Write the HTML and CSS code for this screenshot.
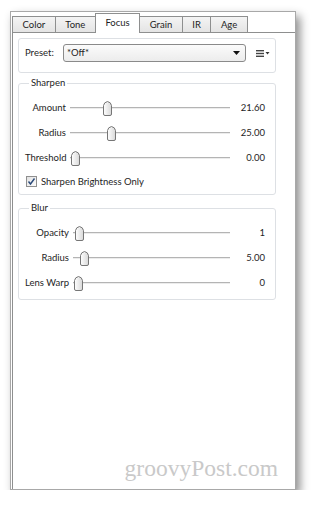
FILE: index.html
```html
<!DOCTYPE html>
<html lang="en">
<head>
  <meta charset="UTF-8" />
  <title>Focus</title>
  <link rel="stylesheet" href="styles.css">
</head>
<body>

  <div class="window">
    <div class="tabs">
      <div class="tab">Color</div>
      <div class="tab">Tone</div>
      <div class="tab active">Focus</div>
      <div class="tab">Grain</div>
      <div class="tab">IR</div>
      <div class="tab">Age</div>
    </div>

    <div class="pane">
      <div class="group preset">
        <span class="preset-label">Preset:</span>
        <div class="select">
          <span>*Off*</span>
          <svg width="7" height="4" viewBox="0 0 7 4"><path d="M0 0H7L3.5 4Z" fill="#111"/></svg>
        </div>
        <svg class="menu" width="14" height="7" viewBox="0 0 14 7">
          <rect x="0" y="0" width="8" height="1.4" fill="#444"/>
          <rect x="0" y="2.8" width="8" height="1.4" fill="#444"/>
          <rect x="0" y="5.6" width="8" height="1.4" fill="#444"/>
          <path d="M9.5 2H13.5L11.5 4.5Z" fill="#333"/>
        </svg>
      </div>

      <fieldset class="group sharpen">
        <legend>Sharpen</legend>
        <div class="row">
          <span class="label">Amount</span>
          <div class="track"><span class="thumb" style="left: 32.5px"></span></div>
          <span class="value">21.60</span>
        </div>
        <div class="row">
          <span class="label">Radius</span>
          <div class="track"><span class="thumb" style="left: 36.5px"></span></div>
          <span class="value">25.00</span>
        </div>
        <div class="row">
          <span class="label">Threshold</span>
          <div class="track"><span class="thumb" style="left: 0.5px"></span></div>
          <span class="value">0.00</span>
        </div>
        <label class="check">
          <span class="box">
            <svg width="9" height="9" viewBox="0 0 9 9"><path d="M1.5 4.5L3.5 7L7.5 1.5" fill="none" stroke="#2b4a7a" stroke-width="1.4"/></svg>
          </span>
          Sharpen Brightness Only
        </label>
      </fieldset>

      <fieldset class="group blur">
        <legend>Blur</legend>
        <div class="row">
          <span class="label">Opacity</span>
          <div class="track"><span class="thumb" style="left: 1.5px"></span></div>
          <span class="value">1</span>
        </div>
        <div class="row">
          <span class="label">Radius</span>
          <div class="track"><span class="thumb" style="left: 6.5px"></span></div>
          <span class="value">5.00</span>
        </div>
        <div class="row">
          <span class="label">Lens Warp</span>
          <div class="track"><span class="thumb" style="left: 0.5px"></span></div>
          <span class="value">0</span>
        </div>
      </fieldset>

      <div class="watermark">groovyPost.com</div>
    </div>
  </div>

</body>
</html>
```

FILE: styles.css
```css
* {
  box-sizing: border-box;
}

body {
  margin: 0;
  background: #ffffff;
  font-family: Lato, 'Liberation Sans', sans-serif;
  font-size: 9.5px;
  color: #1e1e1e;
}

.window {
  margin: 11px 0 0 10px;
  width: 286px;
  height: 479px;
  border: 1px solid #a8a8a8;
  padding-left: 1px;
  background: #ffffff;
  box-shadow: 4px 5px 9px rgba(0, 0, 0, 0.45);
  display: flex;
  flex-direction: column;
}

/* tabs */
.tabs {
  display: flex;
  align-items: flex-end;
  height: 20px;
}

.tab {
  height: 16px;
  line-height: 15px;
  padding: 0 9.5px;
  margin-right: -1px;
  border: 1px solid #8e8f8f;
  border-bottom: none;
  background: linear-gradient(#f4f4f4, #e4e4e4);
  white-space: nowrap;
}

.tab.active {
  position: relative;
  z-index: 1;
  height: 20px;
  line-height: 17px;
  margin-bottom: -1px;
  background: #ffffff;
}

.pane {
  flex: 1;
  display: flex;
  flex-direction: column;
  border-top: 1px solid #8e8f8f;
  border-left: 1px solid #8e8f8f;
  padding: 5px 0 0 5px;
}

/* groups */
.group {
  width: 258px;
  border: 1px solid #dde0e4;
  border-radius: 3px;
  margin: 0;
}

.preset {
  height: 35px;
  display: flex;
  align-items: flex-start;
  padding: 5px 0 0 6px;
  line-height: 18px;
}

.preset-label {
  width: 38px;
}

.select {
  width: 183px;
  height: 18px;
  display: flex;
  align-items: center;
  justify-content: space-between;
  padding: 0 5px 0 3px;
  border: 1px solid #8a8a8a;
  border-radius: 3px;
  background: linear-gradient(#fbfbfb, #ececec);
}

.menu {
  margin: 6px 0 0 10px;
}

fieldset.group {
  padding: 6px 9px 1px 6px;
  margin-top: 4px;
}

fieldset.blur {
  margin-top: 7px;
  padding-bottom: 4px;
}

legend {
  padding: 0 2px;
  margin-left: 4px;
  line-height: 12px;
}

.row {
  display: grid;
  grid-template-columns: 41px 160px 31px;
  column-gap: 4px;
  align-items: center;
  height: 25px;
}

.blur .row {
  grid-template-columns: 44px 157px 31px;
}

.label,
.value {
  text-align: right;
  white-space: nowrap;
}

.track {
  position: relative;
  height: 25px;
}

.track::before {
  content: '';
  position: absolute;
  left: 0;
  right: 0;
  top: 12px;
  height: 1px;
  background: #b4b4b4;
  border-bottom: 1px solid #ececec;
  box-sizing: content-box;
}

.thumb {
  position: absolute;
  top: 6px;
  width: 9px;
  height: 15px;
  background: url("data:image/svg+xml,%3Csvg xmlns='http://www.w3.org/2000/svg' width='9' height='15' viewBox='0 0 9 15'%3E%3Cdefs%3E%3ClinearGradient id='g' x1='0' x2='1'%3E%3Cstop offset='0' stop-color='%23ffffff'/%3E%3Cstop offset='1' stop-color='%23d8d8d8'/%3E%3C/linearGradient%3E%3C/defs%3E%3Cpath d='M0.5 4.5Q1 1.2 4.5 0.5Q8 1.2 8.5 4.5V13Q8.5 14.5 7 14.5H2Q0.5 14.5 0.5 13Z' fill='url(%23g)' stroke='%23767676'/%3E%3C/svg%3E") no-repeat;
}

.check {
  display: flex;
  align-items: center;
  height: 23px;
  padding-left: 1px;
}

.box {
  width: 11px;
  height: 11px;
  margin-right: 4px;
  border: 1px solid #8f8f8f;
  background: linear-gradient(135deg, #e2e2e2, #fbfbfb);
  display: flex;
  align-items: center;
  justify-content: center;
}

.watermark {
  margin-top: auto;
  padding: 0 17px 9px 0;
  text-align: right;
  font-family: 'Liberation Serif', serif;
  font-size: 23.5px;
  line-height: 24px;
  color: #c9c9c9;
}
```
